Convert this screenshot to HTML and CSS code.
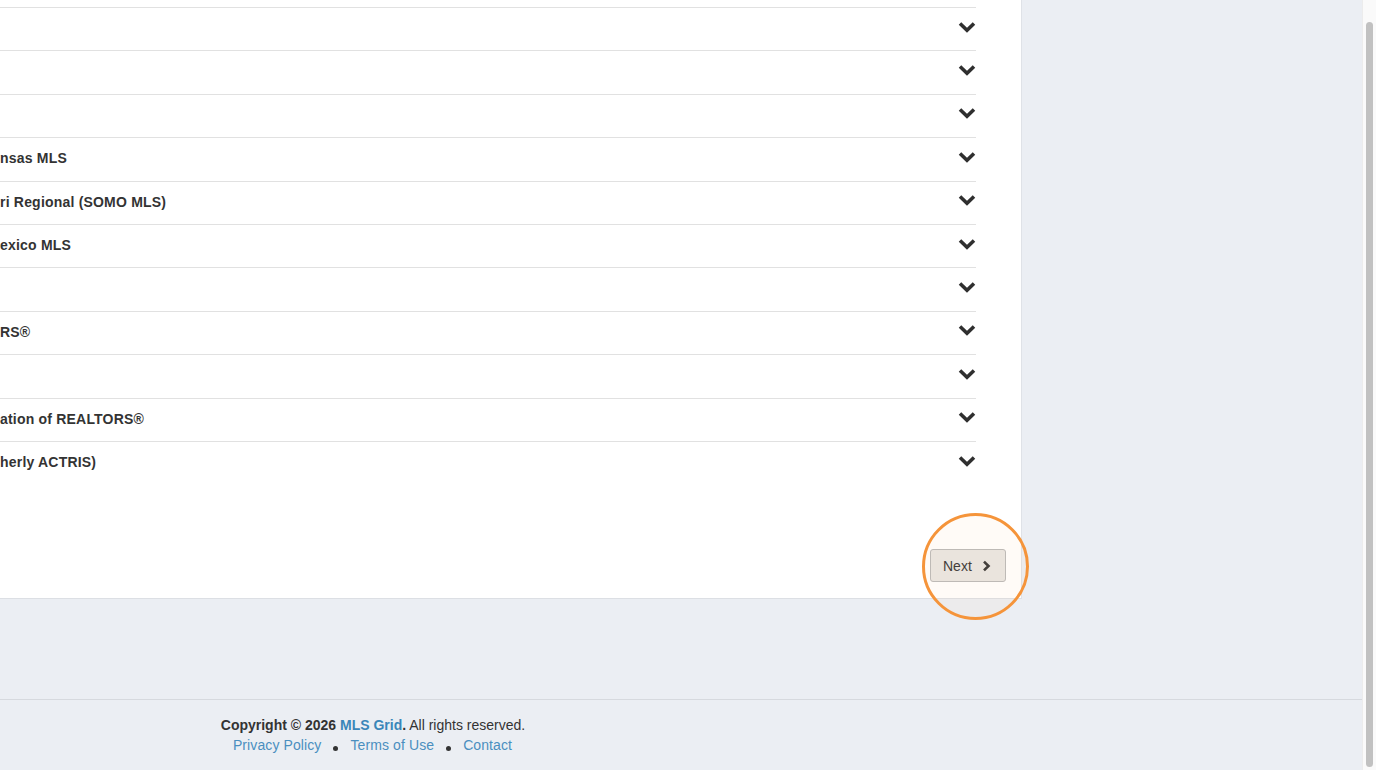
FILE: index.html
```html
<!DOCTYPE html>
<html lang="en">
<head>
  <meta charset="UTF-8">
  <meta name="viewport" content="width=device-width, initial-scale=1.0">
  <title>MLS Grid - Select MLS</title>
  <link rel="stylesheet" href="styles.css">
</head>
<body>
  <div class="viewport">
    <div class="page">
      <div class="content">
        <section class="mls-card">
          <ul class="mls-list">
            <li class="mls-row"><span class="mls-name"></span><svg class="chev" viewBox="0 0 18 12"><polyline points="2,2.5 9,9.2 16,2.5"/></svg></li>
            <li class="mls-row"><span class="mls-name"></span><svg class="chev" viewBox="0 0 18 12"><polyline points="2,2.5 9,9.2 16,2.5"/></svg></li>
            <li class="mls-row"><span class="mls-name"></span><svg class="chev" viewBox="0 0 18 12"><polyline points="2,2.5 9,9.2 16,2.5"/></svg></li>
            <li class="mls-row"><span class="mls-name">nsas MLS</span><svg class="chev" viewBox="0 0 18 12"><polyline points="2,2.5 9,9.2 16,2.5"/></svg></li>
            <li class="mls-row"><span class="mls-name">ri Regional (SOMO MLS)</span><svg class="chev" viewBox="0 0 18 12"><polyline points="2,2.5 9,9.2 16,2.5"/></svg></li>
            <li class="mls-row"><span class="mls-name">exico MLS</span><svg class="chev" viewBox="0 0 18 12"><polyline points="2,2.5 9,9.2 16,2.5"/></svg></li>
            <li class="mls-row"><span class="mls-name"></span><svg class="chev" viewBox="0 0 18 12"><polyline points="2,2.5 9,9.2 16,2.5"/></svg></li>
            <li class="mls-row"><span class="mls-name">RS®</span><svg class="chev" viewBox="0 0 18 12"><polyline points="2,2.5 9,9.2 16,2.5"/></svg></li>
            <li class="mls-row"><span class="mls-name"></span><svg class="chev" viewBox="0 0 18 12"><polyline points="2,2.5 9,9.2 16,2.5"/></svg></li>
            <li class="mls-row"><span class="mls-name">ation of REALTORS®</span><svg class="chev" viewBox="0 0 18 12"><polyline points="2,2.5 9,9.2 16,2.5"/></svg></li>
            <li class="mls-row"><span class="mls-name">herly ACTRIS)</span><svg class="chev" viewBox="0 0 18 12"><polyline points="2,2.5 9,9.2 16,2.5"/></svg></li>
          </ul>

          <div class="card-actions">
            <div class="next-wrap">
              <button class="btn-next">Next <svg class="chev-right" viewBox="0 0 9 12"><polyline points="2,1.6 6.5,6 2,10.4"/></svg></button>
              <span class="highlight-ring"></span>
            </div>
          </div>
        </section>
        <div class="side"></div>
      </div>

      <footer class="site-footer">
        <div class="footer-inner">
          <p class="copy"><strong>Copyright © 2026 <a href="#" class="brand">MLS Grid</a>.</strong> All rights reserved.</p>
          <p class="links">
            <a href="#">Privacy Policy</a>
            <span class="dot"></span>
            <a href="#">Terms of Use</a>
            <span class="dot"></span>
            <a href="#">Contact</a>
          </p>
        </div>
      </footer>
    </div>

    <div class="scrollbar"><div class="thumb"></div></div>
  </div>
</body>
</html>
```

FILE: styles.css
```css
* {
  margin: 0;
  padding: 0;
  box-sizing: border-box;
}

html, body {
  height: 100%;
  overflow: hidden;
}

body {
  font-family: "Liberation Sans", Arial, sans-serif;
  font-size: 14px;
  color: #333;
  background: #ebeef3;
}

.viewport {
  display: flex;
  height: 770px;
}

.page {
  flex: 1;
  display: flex;
  flex-direction: column;
}

.content {
  display: flex;
}

/* card with the list of MLS accordions */
.mls-card {
  width: 1022px;
  background: #fff;
  border-right: 1px solid #dfe2e7;
  border-bottom: 1px solid #dcdfe4;
  padding: 7px 15px 16px 0;
}

.mls-list {
  list-style: none;
  margin-right: 30px;
}

.mls-row {
  height: 43.4px;
  display: flex;
  align-items: center;
  justify-content: space-between;
  border-top: 1px solid #e1e1e1;
}

.mls-name {
  font-weight: 700;
  font-size: 14px;
  letter-spacing: 0.2px;
  color: #333;
  white-space: nowrap;
  margin-top: -2px;
}

.chev {
  width: 18px;
  height: 12px;
  margin-top: -5px;
  fill: none;
  stroke: #2f2f2f;
  stroke-width: 3.6;
  stroke-linejoin: miter;
}

.card-actions {
  display: flex;
  justify-content: flex-end;
  margin-top: 65px;
}

.next-wrap {
  position: relative;
}

.btn-next {
  display: flex;
  align-items: center;
  gap: 10px;
  height: 33px;
  padding: 0 10px 0 12px;
  width: 76px;
  background: #e9e6e3;
  border: 1px solid #b9b9b9;
  border-radius: 3px;
  font-family: "Liberation Sans", Arial, sans-serif;
  font-size: 14px;
  color: #333;
  cursor: pointer;
}

.chev-right {
  flex-shrink: 0;
  width: 9px;
  height: 12px;
  fill: none;
  stroke: #333;
  stroke-width: 2.6;
}

/* orange callout ring around the button */
.highlight-ring {
  position: absolute;
  left: 50%;
  top: 50%;
  width: 107px;
  height: 107px;
  margin: -53px 0 0 -46px;
  border: 3px solid #f5943a;
  border-radius: 50%;
  background: rgba(250, 200, 150, 0.08);
  pointer-events: none;
}

.side {
  flex: 1;
}

.site-footer {
  margin-top: 100px;
  border-top: 1px solid #d6d9de;
  padding-top: 15px;
}

.footer-inner {
  width: 746px;
  text-align: center;
  line-height: 20px;
}

.footer-inner a {
  color: #4a8fbf;
  text-decoration: none;
}

.copy strong {
  color: #333;
}

.copy .brand {
  color: #3a86b9;
}

.links {
  display: flex;
  justify-content: center;
  align-items: center;
  gap: 11px;
  margin-left: -1px;
  letter-spacing: 0.1px;
}

.dot {
  width: 5px;
  height: 5px;
  border-radius: 50%;
  background: #333;
  margin: 0 1px;
  position: relative;
  top: 3px;
}

/* page scrollbar */
.scrollbar {
  width: 14px;
  background: #fafafa;
  border-left: 1px solid #ececec;
  padding: 22px 3px 3px 3px;
}

.thumb {
  height: 100%;
  background: #c1c1c1;
  border-radius: 4px;
}
```
